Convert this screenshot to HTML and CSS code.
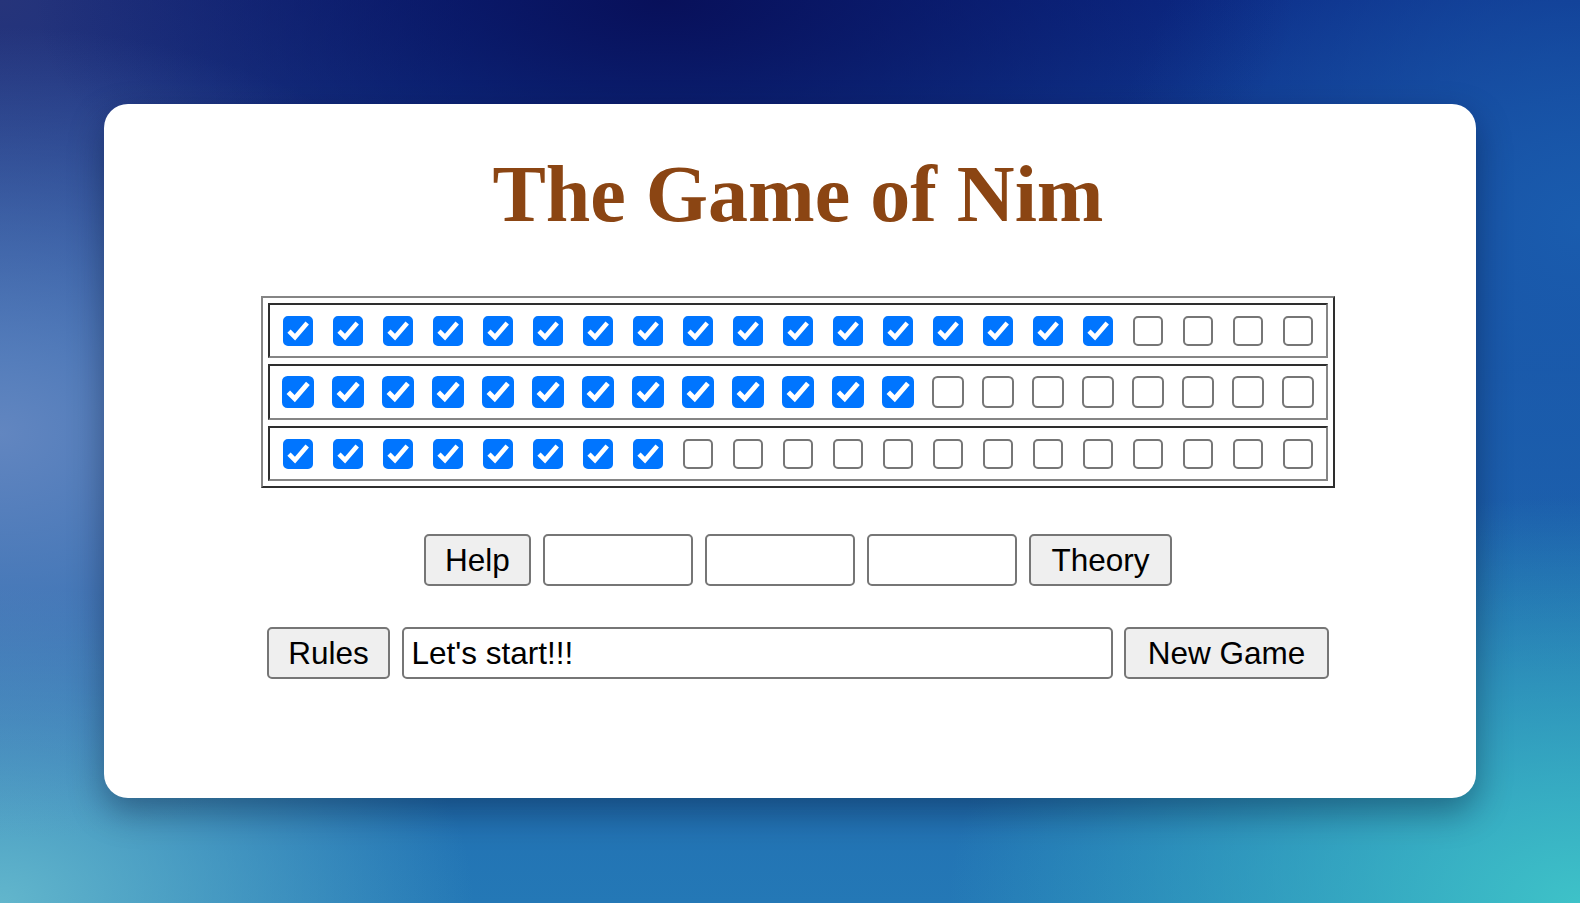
FILE: index.html
```html
<!DOCTYPE html>
<html lang="en">
<head>
<meta charset="utf-8">
<title>The Game of Nim</title>
<link rel="stylesheet" href="styles.css">
</head>
<body>
<main class="card">
  <h1 class="title">The Game of Nim</h1>
  <div class="board">
    <div class="heap">
      <input type="checkbox" class="stone" checked><input type="checkbox" class="stone" checked><input type="checkbox" class="stone" checked><input type="checkbox" class="stone" checked><input type="checkbox" class="stone" checked><input type="checkbox" class="stone" checked><input type="checkbox" class="stone" checked><input type="checkbox" class="stone" checked><input type="checkbox" class="stone" checked><input type="checkbox" class="stone" checked><input type="checkbox" class="stone" checked><input type="checkbox" class="stone" checked><input type="checkbox" class="stone" checked><input type="checkbox" class="stone" checked><input type="checkbox" class="stone" checked><input type="checkbox" class="stone" checked><input type="checkbox" class="stone" checked><input type="checkbox" class="stone"><input type="checkbox" class="stone"><input type="checkbox" class="stone"><input type="checkbox" class="stone">
    </div>
    <div class="heap heap-big">
      <input type="checkbox" class="stone" checked><input type="checkbox" class="stone" checked><input type="checkbox" class="stone" checked><input type="checkbox" class="stone" checked><input type="checkbox" class="stone" checked><input type="checkbox" class="stone" checked><input type="checkbox" class="stone" checked><input type="checkbox" class="stone" checked><input type="checkbox" class="stone" checked><input type="checkbox" class="stone" checked><input type="checkbox" class="stone" checked><input type="checkbox" class="stone" checked><input type="checkbox" class="stone" checked><input type="checkbox" class="stone"><input type="checkbox" class="stone"><input type="checkbox" class="stone"><input type="checkbox" class="stone"><input type="checkbox" class="stone"><input type="checkbox" class="stone"><input type="checkbox" class="stone"><input type="checkbox" class="stone">
    </div>
    <div class="heap">
      <input type="checkbox" class="stone" checked><input type="checkbox" class="stone" checked><input type="checkbox" class="stone" checked><input type="checkbox" class="stone" checked><input type="checkbox" class="stone" checked><input type="checkbox" class="stone" checked><input type="checkbox" class="stone" checked><input type="checkbox" class="stone" checked><input type="checkbox" class="stone"><input type="checkbox" class="stone"><input type="checkbox" class="stone"><input type="checkbox" class="stone"><input type="checkbox" class="stone"><input type="checkbox" class="stone"><input type="checkbox" class="stone"><input type="checkbox" class="stone"><input type="checkbox" class="stone"><input type="checkbox" class="stone"><input type="checkbox" class="stone"><input type="checkbox" class="stone"><input type="checkbox" class="stone">
    </div>
  </div>
  <div class="controls controls-top">
    <button class="btn btn-help" type="button">Help</button>
    <input class="field field-small" type="text">
    <input class="field field-small" type="text">
    <input class="field field-small" type="text">
    <button class="btn btn-theory" type="button">Theory</button>
  </div>
  <div class="controls controls-bottom">
    <button class="btn btn-rules" type="button">Rules</button>
    <input class="field field-message" type="text" value="Let's start!!!">
    <button class="btn btn-new" type="button">New Game</button>
  </div>
</main>
</body>
</html>
```

FILE: styles.css
```css
html, body {
  margin: 0;
  padding: 0;
}

body {
  width: 1580px;
  height: 903px;
  overflow: hidden;
  font-family: "Liberation Sans", Arial, sans-serif;
  background-color: #1a4f9e;
  background-image:
    radial-gradient(ellipse 40% 32% at 42% 0%, #08105a 0%, rgba(8, 16, 90, 0) 100%),
    radial-gradient(ellipse 35% 45% at 0% 48%, #6286c0 0%, rgba(98, 134, 192, 0) 100%),
    radial-gradient(ellipse 30% 35% at 0% 100%, #62b6cc 0%, rgba(98, 182, 204, 0) 100%),
    radial-gradient(ellipse 40% 45% at 100% 100%, #3ec2c8 0%, rgba(62, 194, 200, 0) 100%),
    radial-gradient(ellipse 30% 50% at 100% 25%, #1a5cae 0%, rgba(26, 92, 174, 0) 100%),
    radial-gradient(ellipse 30% 40% at 0% 0%, #26347a 0%, rgba(38, 52, 122, 0) 100%),
    linear-gradient(180deg, #0c2a86 0%, #1b5aa8 45%, #2478b6 100%);
}

.card {
  box-sizing: border-box;
  width: 1372px;
  height: 694px;
  margin: 104px auto 0;
  padding: 44px 0 0 16px;
  background: #ffffff;
  border-radius: 24px;
  box-shadow: 0 14px 34px rgba(0, 10, 40, 0.38);
  display: flex;
  flex-direction: column;
  align-items: center;
}

.title {
  margin: 0;
  font-family: "Liberation Serif", "Times New Roman", serif;
  font-weight: 700;
  font-size: 80px;
  line-height: 92px;
  color: #8b4513;
}

.board {
  box-sizing: border-box;
  width: 1074px;
  margin-top: 56px;
  padding: 5px;
  border: 2px solid;
  border-color: #858585 #2e2e2e #2e2e2e #858585;
  display: flex;
  flex-direction: column;
  gap: 6px;
}

.heap {
  box-sizing: border-box;
  height: 55px;
  border: 2px solid;
  border-color: #2e2e2e #858585 #858585 #2e2e2e;
  display: flex;
  align-items: center;
  justify-content: center;
  gap: 20px;
}

.heap-big {
  height: 56px;
  gap: 17.5px;
}

.stone {
  -webkit-appearance: none;
  appearance: none;
  box-sizing: border-box;
  flex: none;
  margin: 0;
  width: 30px;
  height: 30px;
  border: 2.3px solid #767676;
  border-radius: 5px;
  background-color: #ffffff;
  background-repeat: no-repeat;
  background-position: center;
  background-size: 100% 100%;
}

.stone:checked {
  border-color: #0075ff;
  background-color: #0075ff;
  background-image: url("data:image/svg+xml,%3Csvg xmlns='http://www.w3.org/2000/svg' viewBox='0 0 26 26'%3E%3Cpath d='M4 13.2 L10 19.2 L22.2 5' fill='none' stroke='%23ffffff' stroke-width='4.6' stroke-linejoin='miter'/%3E%3C/svg%3E");
}

.heap-big .stone {
  width: 32.5px;
  height: 32.5px;
  border-width: 2.5px;
  border-radius: 5.5px;
}

.controls {
  display: flex;
  gap: 12px;
  height: 52px;
}

.controls-top {
  margin-top: 46px;
}

.controls-bottom {
  margin-top: 41px;
  gap: 11.5px;
}

.btn,
.field {
  box-sizing: border-box;
  height: 52px;
  margin: 0;
  font-family: "Liberation Sans", Arial, Helvetica, sans-serif;
  font-size: 31.5px;
  color: #000000;
  border: 2px solid #767676;
  border-radius: 5px;
}

.btn {
  padding: 0;
  background: #efefef;
  text-align: center;
}

.field {
  padding: 0 8px;
  background: #ffffff;
}

.btn-help { width: 107px; }
.btn-theory { width: 143px; }
.field-small { width: 150px; }
.btn-rules { width: 123px; }
.field-message { width: 711px; }
.btn-new { width: 205px; }
```
